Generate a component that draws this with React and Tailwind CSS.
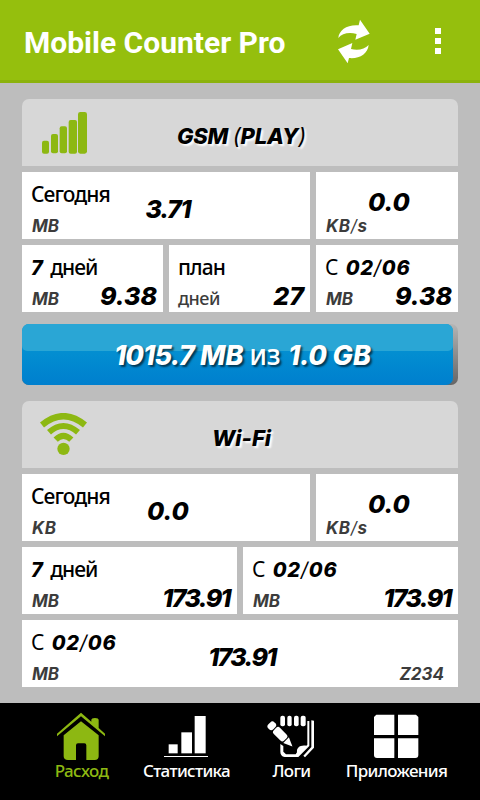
import React from 'react';

const NUM = "font-['Inter',sans-serif] italic font-extrabold";

function Word({ children, className = '' }) {
  return (
    <span className={`font-['Noto_Sans',sans-serif] not-italic font-medium ${className}`}>{children}</span>
  );
}

function Slash() {
  return <span className="font-normal">/</span>;
}

function Cell({ width = 'flex-1', label, unit, value, note, valueClass }) {
  return (
    <div className={`grid h-[67px] grid-cols-1 grid-rows-1 bg-white whitespace-nowrap ${width}`}>
      <div className={`col-start-1 row-start-1 self-start pl-[9px] pt-[7px] text-[20px] leading-[30px] text-black ${NUM}`}>
        {label}
      </div>
      <div className={`col-start-1 row-start-1 flex justify-between self-end pb-[1px] pl-[10px] pr-[14px] text-[17px] leading-6 text-[#3c3c3c] ${NUM} font-bold!`}>
        <span>{unit}</span>
        <span>{note}</span>
      </div>
      <div className={`col-start-1 row-start-1 text-[25px] leading-[30px] text-black ${NUM} ${valueClass}`}>
        {value}
      </div>
    </div>
  );
}

const CORNER = 'self-end justify-self-end pr-[6px] mb-[1px]';
const MIDDLE = 'self-start justify-self-center pt-[22px] pl-1';
const RAISED = 'self-start justify-self-center pt-[15px] pl-1';

function CardTitle({ icon, children, className = '' }) {
  return (
    <div className="grid h-[67px] grid-cols-1 grid-rows-1 rounded-t-[7px] bg-[#d7d7d7]">
      <div className="col-start-1 row-start-1 pl-[18px] pt-3">{icon}</div>
      <div className={`col-start-1 row-start-1 justify-self-center pl-[3px] pt-[22px] text-[22px] leading-[30px] text-black [text-shadow:2px_2px_2px_#fff] ${NUM} ${className}`}>
        {children}
      </div>
    </div>
  );
}

function SignalIcon() {
  return (
    <svg width="48" height="44" viewBox="90 63 144 132" fill="#8db812">
      <rect x="96" y="152" width="21" height="39" rx="6" />
      <rect x="123" y="132" width="21" height="58" rx="6" />
      <rect x="149" y="109" width="22" height="81" rx="6" />
      <rect x="176" y="90" width="25" height="101" rx="6" />
      <rect x="204" y="66" width="27" height="125" rx="7" />
    </svg>
  );
}

function WifiIcon() {
  return (
    <svg width="48" height="44" viewBox="90 69 144 132" fill="none" stroke="#8db812" strokeLinejoin="round">
      <path d="M96 105 Q160 52 225 105" strokeWidth="19" />
      <path d="M117 127 Q160 89 204 127" strokeWidth="18" />
      <path d="M137 149 Q160 126 184 149" strokeWidth="18" />
      <circle cx="160.500" cy="176.500" r="18.500" fill="#8db812" stroke="none" />
    </svg>
  );
}

function RefreshIcon() {
  return (
    <svg width="60" height="60" viewBox="0 0 180 180" fill="#fff">
      <path d="M40 84 C42 60 67 43 101 46 L105 29 L134 71 L91 89 L95 72 C72 66 51 70 40 84 Z" />
      <path d="M131 105 C128 132 103 147 72 144 L68 160 L39 118 L82 99 L78 117 C99 122 119 118 131 105 Z" />
    </svg>
  );
}

function HomeIcon() {
  return (
    <svg width="49" height="48" viewBox="81 51 147 144" fill="#8db812">
      <path d="M81 116 L153 53 L184 80 V75 Q184 69 195 69 Q206 69 206 75 V99 L225 116 V124 L153 64 L81 124 Z" />
      <path d="M101 121 L153 79 L206 121 V184 Q206 195 194 195 H169 V151 Q169 145 163 145 H144 Q138 145 138 151 V195 H114 Q101 195 101 184 Z" />
    </svg>
  );
}

function StatsIcon() {
  return (
    <svg width="49" height="48" viewBox="396 51 147 144" fill="#fff">
      <rect x="416" y="148" width="27" height="27" />
      <rect x="454" y="112" width="32" height="63" />
      <rect x="494" y="63" width="33" height="112" />
      <rect x="402" y="183" width="132" height="3" />
    </svg>
  );
}

function LogsIcon() {
  return (
    <svg width="49" height="48" viewBox="81 51 147 144" fill="#fff">
      <rect x="121" y="62" width="14" height="32" rx="6" />
      <rect x="142" y="62" width="13" height="32" rx="6" />
      <rect x="162" y="62" width="14" height="32" rx="6" />
      <rect x="182" y="62" width="15" height="32" rx="6" />
      <g transform="translate(88 85) rotate(45)">
        <rect x="0" y="-13" width="21" height="26" rx="9" />
        <rect x="24" y="-13" width="44" height="26" rx="8" />
        <path d="M71 -12 L98 0 L71 12 Z" />
      </g>
      <path d="M121 147 L130 153 V170 L138 178 H167 L171 172 C169 158 180 149 199 152 L202 149 V78 H208 V153 L175 186 H134 Q121 183 121 170 Z" />
      <path d="M214 76 L222 77 V158 L195 187 L190 182 L214 156 Z" />
    </svg>
  );
}

function AppsIcon() {
  return (
    <svg width="49" height="48" viewBox="396 51 147 144" fill="#fff">
      <path d="M409 59 H463 V120 H402 V66 Z" />
      <path d="M474 59 H528 L535 66 V120 H474 Z" />
      <path d="M402 130 H463 V189 H411 Q402 189 402 180 Z" />
      <path d="M474 130 H535 V180 Q535 189 526 189 H474 Z" />
    </svg>
  );
}

function Tab({ icon, label, className = 'text-white' }) {
  return (
    <div className={`flex w-[105px] flex-col items-center whitespace-nowrap font-['Noto_Sans',sans-serif] text-[17px] font-medium leading-6 tracking-[-0.65px] ${className}`}>
      {icon}
      <span className="-mt-[1px]">{label}</span>
    </div>
  );
}

export default function App() {
  const today = <Word className="text-[21px] tracking-[-0.9px]">Сегодня</Word>;
  const week = <>7 <Word className="ml-[3px] text-[21px] tracking-[-1px]">дней</Word></>;
  const since = (
    <>
      <Word className="mr-[2px] text-[21px] font-normal!">С</Word>
      <span className="tracking-[0.8px]"> 02<Slash />06</span>
    </>
  );
  const speed = <span className="tracking-[0.6px]">KB<Slash />s</span>;
  const total = <span className="tracking-[-1.6px]">173.91</span>;
  const totalCorner = 'self-end justify-self-end pr-[7px] mb-[1px]';

  return (
    <div className="flex h-[800px] w-[480px] flex-col overflow-hidden bg-[#bdbdbd]">
      <header className="flex h-[83px] items-start border-b-[3px] border-[#8bb20c] bg-[#95bf0d]">
        <h1 className="w-[325px] whitespace-nowrap pl-[24px] pt-[23px] font-['Roboto',sans-serif] text-[30px] font-bold leading-10 text-white">
          Mobile Counter Pro
        </h1>
        <div className="pt-[10px]"><RefreshIcon /></div>
        <div className="flex flex-col gap-1 pl-[50px] pt-7">
          <i className="size-[6px] bg-white" />
          <i className="size-[6px] bg-white" />
          <i className="size-[6px] bg-white" />
        </div>
      </header>

      <main className="flex flex-1 flex-col px-[22px] pt-4">
        <section className="flex flex-col gap-[6px]">
          <CardTitle icon={<SignalIcon />} className="tracking-[-0.2px]">
            GSM <span className="font-normal">(</span>PLAY<span className="font-normal">)</span>
          </CardTitle>
          <div className="flex gap-[6px]">
            <Cell label={today} unit="MB" value={<span className="tracking-[-1.2px]">3.71</span>} valueClass={MIDDLE} />
            <Cell width="w-[142px]" unit={speed} value="0.0" valueClass={RAISED} />
          </div>
          <div className="flex gap-[6px]">
            <Cell width="w-[141px]" label={week} unit="MB" value="9.38" valueClass={CORNER} />
            <Cell
              label={<Word className="text-[21px] tracking-[-0.9px]">план</Word>}
              unit={<Word className="-ml-[1px] text-[18px] tracking-[-0.5px]">дней</Word>}
              value="27"
              valueClass={CORNER}
            />
            <Cell width="w-[142px]" label={since} unit="MB" value="9.38" valueClass={CORNER} />
          </div>
        </section>

        <div className="mt-3 h-[61px] rounded-[7px] bg-linear-to-b from-[#b5b5b5] to-[#666]">
          <div className="grid h-full w-[431px] grid-cols-1 grid-rows-1 overflow-hidden rounded-[7px] bg-linear-to-b from-[#0a9bd3] to-[#007fce]">
            <div className="col-start-1 row-start-1 h-[27px] rounded-b-[5px] bg-[#2aa6d5]" />
            <div className={`col-start-1 row-start-1 justify-self-center whitespace-nowrap pl-[10px] pt-[15px] text-[27px] leading-[30px] text-white [text-shadow:2px_2px_2px_#0009] ${NUM}`}>
              <span className="tracking-[-0.7px]">1015.7</span> MB <Word className="text-[28px] tracking-[-0.3px]">из</Word>{' '}
              <span className="ml-[2px] tracking-[-0.3px]">1.0</span> GB
            </div>
          </div>
        </div>

        <section className="mt-4 flex flex-col gap-[6px]">
          <CardTitle icon={<WifiIcon />}>Wi-Fi</CardTitle>
          <div className="flex gap-[6px]">
            <Cell label={today} unit={<span className="tracking-[0.6px]">KB</span>} value="0.0" valueClass={MIDDLE} />
            <Cell width="w-[142px]" unit={speed} value="0.0" valueClass={RAISED} />
          </div>
          <div className="flex gap-[6px]">
            <Cell label={week} unit="MB" value={total} valueClass={totalCorner} />
            <Cell label={since} unit="MB" value={total} valueClass={totalCorner} />
          </div>
          <Cell width="w-full" label={since} unit="MB" value={total} note="Z234" valueClass={MIDDLE} />
        </section>
      </main>

      <nav className="flex h-[97px] bg-black pl-[29px] pt-[9px]">
        <Tab icon={<HomeIcon />} label="Расход" className="text-[#8db812]" />
        <Tab icon={<StatsIcon />} label="Статистика" />
        <Tab icon={<LogsIcon />} label="Логи" />
        <Tab icon={<AppsIcon />} label="Приложения" />
      </nav>
    </div>
  );
}
